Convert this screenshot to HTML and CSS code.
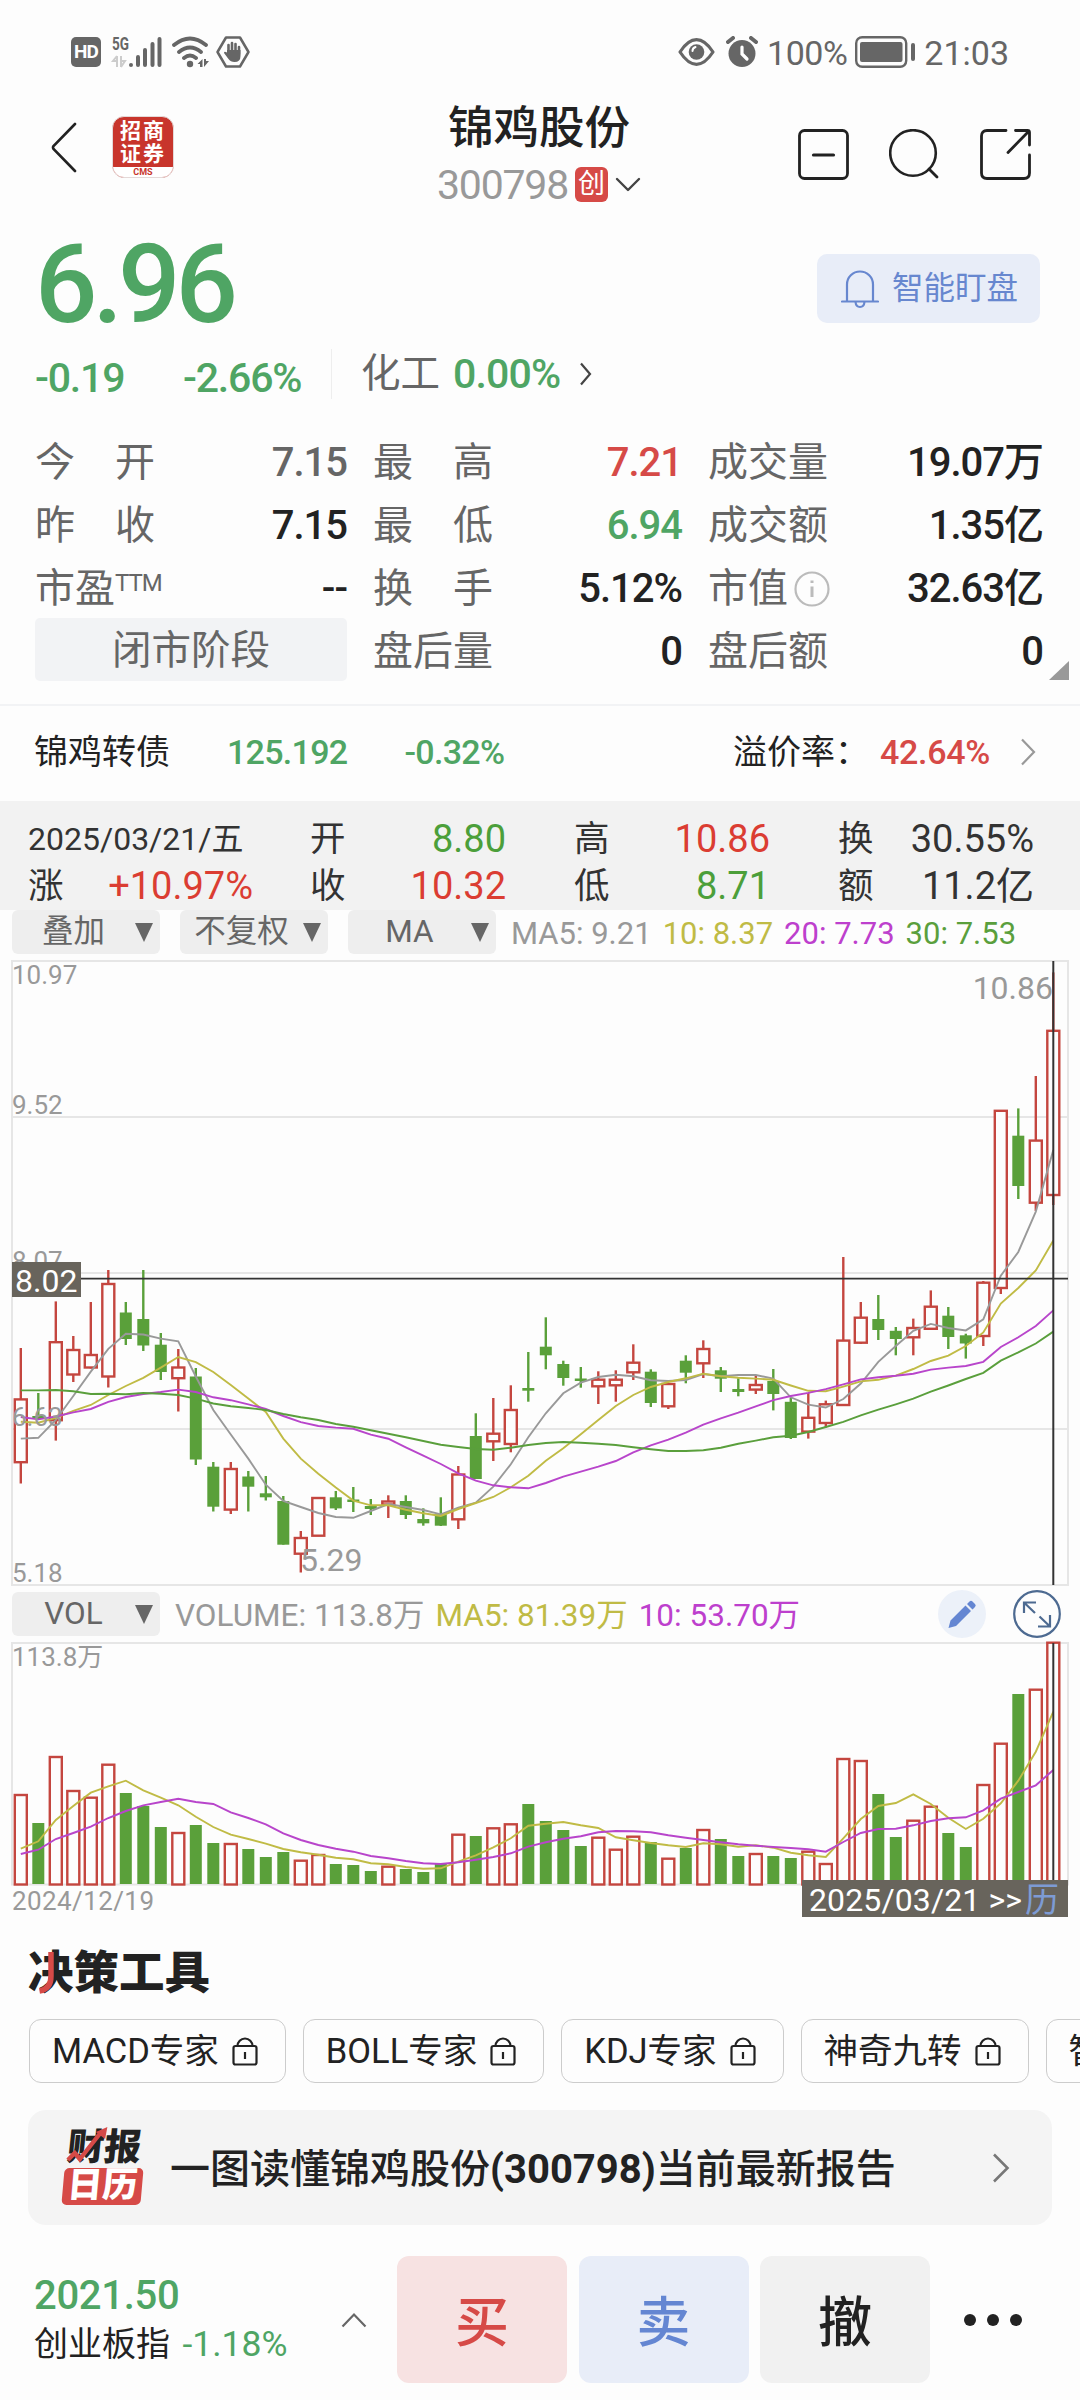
FILE: index.html
```html
<!DOCTYPE html>
<html lang="zh-CN">
<head>
<meta charset="utf-8">
<title>锦鸡股份 300798</title>
<meta name="viewport" content="width=device-width, initial-scale=1.0">
<link rel="stylesheet" href="styles.css">
</head>
<body>
<div class="statusbar">
    <span class="hd">HD</span>
    <svg class="signal" width="50" height="32" viewBox="0 0 50 32">
        <text x="0" y="14" class="signal-text" textLength="17" lengthAdjust="spacingAndGlyphs">5G</text>
        <path d="M5 20v11M5 20l-4 5h4M9 20v11M9 31l4-6h-4" stroke="#ccc" stroke-width="2" fill="none"/>
        <path d="M19 29v0M26 21v8M33 14v15M40.500 8v21M47.500 3v26" stroke="#666" stroke-width="4" stroke-linecap="round"/>
    </svg>
    <svg class="wifi" width="38" height="32" viewBox="0 0 38 32">
        <path d="M2 9Q18 -4 34 9M7 16Q18 7 29 16M12 22Q18 17 24 22" stroke="#666" stroke-width="3.800" stroke-linecap="round" fill="none"/>
        <circle cx="18" cy="28" r="3.200" fill="#666"/>
        <path d="M25.500 28l5-5v8h-2.500v-3zM32 23v8l5-6h-3v-2z" fill="#666"/>
    </svg>
    <svg width="34" height="32" viewBox="0 0 34 32">
        <path d="M10 1.500h14l8.500 14.500-8.500 14.500H10L1.500 16z" fill="none" stroke="#666" stroke-width="2.500" stroke-linejoin="round"/>
        <path d="M12.500 17V9M16 16V7M19.500 16V8M23 18v-7" stroke="#666" stroke-width="2.600" stroke-linecap="round"/>
        <path d="M11 14h13.500v6q0 6-6 6-4 0-6-3l-4.500-6q0-2 3-.500z" fill="#666"/>
    </svg>
    <div class="status-right">
        <svg width="37" height="28" viewBox="0 0 37 28">
            <path d="M2 14Q10 1.700 18.500 1.700 27 1.700 35 14 27 26.300 18.500 26.300 10 26.300 2 14z" fill="none" stroke="#666" stroke-width="3.200" stroke-linejoin="round"/>
            <circle cx="18.500" cy="14" r="7.800" fill="#666"/>
            <path d="M14.500 13q0-3 3-4" stroke="#fff" stroke-width="2" fill="none" stroke-linecap="round"/>
        </svg>
        <svg class="alarm" width="32" height="32" viewBox="0 0 32 32">
            <circle cx="16" cy="17.500" r="13.500" fill="#666"/>
            <path d="M2 6l5-4M30 6l-5-4" stroke="#666" stroke-width="4" stroke-linecap="round"/>
            <path d="M16 11v7l5 5" stroke="#fff" stroke-width="3.200" fill="none" stroke-linecap="round"/>
        </svg>
        <span class="battery-num">100%</span>
        <svg width="60" height="32" viewBox="0 0 60 32">
            <rect x="1.200" y="1.200" width="50" height="29.600" rx="6" fill="none" stroke="#666" stroke-width="2.400"/>
            <rect x="5" y="6" width="42.500" height="20" rx="2" fill="#666"/>
            <rect x="56" y="7" width="4" height="18" rx="2" fill="#666"/>
        </svg>
        <span class="clock">21:03</span>
    </div>
</div>

<header class="topbar">
    <svg class="back" width="26" height="52" viewBox="0 0 26 52"><path d="M24 2L2.500 24q-1 1.500 0 3L24 49" fill="none" stroke="#222" stroke-width="2.600" stroke-linecap="round"/></svg>
    <div class="broker">
        <div class="broker-name">招商<br>证券</div>
        <div class="broker-en">CMS</div>
    </div>
    <div class="stock">
        <div class="stock-name">锦鸡股份</div>
        <div class="stock-code">300798<span class="board">创</span><svg width="26" height="16" viewBox="0 0 26 16"><path d="M2 2l11 11L24 2" fill="none" stroke="#444" stroke-width="2.400" stroke-linecap="round" stroke-linejoin="round"/></svg></div>
    </div>
    <div class="actions">
        <svg width="52" height="52" viewBox="0 0 52 52"><rect x="1.500" y="1.500" width="48" height="48" rx="5" fill="none" stroke="#222" stroke-width="2.800"/><path d="M15.500 26h20" stroke="#222" stroke-width="3.200" stroke-linecap="round"/></svg>
        <svg width="52" height="52" viewBox="0 0 52 52"><circle cx="24" cy="24" r="22.800" fill="none" stroke="#222" stroke-width="2.600"/><path d="M40 40l8 8" stroke="#222" stroke-width="2.800" stroke-linecap="round"/></svg>
        <svg width="52" height="52" viewBox="0 0 52 52"><path d="M26 1.500H7Q1.500 1.500 1.500 7v37q0 5.500 5.500 5.500h37q5.500 0 5.500-5.500V26M35.500 1.500h12q2 0 2 2V16M49 2L28 23.500" fill="none" stroke="#222" stroke-width="2.800" stroke-linecap="round"/></svg>
    </div>
</header>

<section class="price-row">
    <div class="price">6.96</div>
    <div class="watch">
        <svg width="38" height="40" viewBox="0 0 38 40"><path d="M6 32V15.500a13 13 0 0 1 26 0V32M1 32.500h36M14.500 33q.500 5 4.500 5t4.500-5" fill="none" stroke="#6787cf" stroke-width="2.200" stroke-linecap="round"/></svg>
        <span>智能盯盘</span>
    </div>
</section>
<section class="change-row">
    <span class="chg green">-0.19</span>
    <span class="pct green">-2.66%</span>
    <span class="industry">化工</span>
    <span class="industry-pct green">0.00%</span>
    <svg width="13" height="24" viewBox="0 0 13 24"><path d="M2 1.500L11 12 2 22.500" fill="none" stroke="#444" stroke-width="2.200"/></svg>
</section>

<section class="quotes">
    <div class="q"><span>今　开</span><b class="gray">7.15</b></div>
    <div class="q"><span>最　高</span><b class="red">7.21</b></div>
    <div class="q"><span>成交量</span><b>19.07万</b></div>
    <div class="q"><span>昨　收</span><b>7.15</b></div>
    <div class="q"><span>最　低</span><b class="green">6.94</b></div>
    <div class="q"><span>成交额</span><b>1.35亿</b></div>
    <div class="q"><span>市盈<sup>TTM</sup></span><b>--</b></div>
    <div class="q"><span>换　手</span><b>5.12%</b></div>
    <div class="q"><span>市值<svg class="info" width="36" height="36" viewBox="0 0 36 36"><circle cx="18" cy="18" r="16.500" fill="none" stroke="#bbb" stroke-width="2.200"/><path d="M18 15.500V26M18 9.500v2.500" stroke="#bbb" stroke-width="3"/></svg></span><b>32.63亿</b></div>
    <div class="phase">闭市阶段</div>
    <div class="q"><span>盘后量</span><b>0</b></div>
    <div class="q"><span>盘后额</span><b>0</b></div>
    <i class="corner"></i>
</section>

<section class="bond">
    <span>锦鸡转债</span>
    <b class="green bond-price">125.192</b>
    <b class="green bond-pct">-0.32%</b>
    <span class="premium">溢价率：</span>
    <b class="red premium-num">42.64%</b>
    <svg width="16" height="28" viewBox="0 0 16 28"><path d="M2 1.500L14 14 2 26.500" fill="none" stroke="#999" stroke-width="2.200"/></svg>
</section>

<section class="daybar">
    <div class="d first"><span class="date">2025/03/21/五</span></div>
    <div class="d"><span>开</span><em class="dn">8.80</em></div>
    <div class="d"><span>高</span><em class="up">10.86</em></div>
    <div class="d"><span>换</span><em>30.55%</em></div>
    <div class="d first"><span>涨</span><em class="up">+10.97%</em></div>
    <div class="d"><span>收</span><em class="up">10.32</em></div>
    <div class="d"><span>低</span><em class="dn">8.71</em></div>
    <div class="d"><span>额</span><em>11.2亿</em></div>
</section>

<section class="indicators">
    <div class="select"><span>叠加</span><i></i></div>
    <div class="select"><span>不复权</span><i></i></div>
    <div class="select"><span>MA</span><i></i></div>
    <div class="legend">
        <span class="c5">MA5: 9.21</span><span class="c10">10: 8.37</span><span class="c20">20: 7.73</span><span class="c30">30: 7.53</span>
    </div>
</section>
<svg class="kline" id="kline" width="1080" height="638" viewBox="0 0 1080 638"></svg>

<section class="indicators vol-head">
    <div class="select"><span>VOL</span><i></i></div>
    <div class="legend">
        <span class="c5">VOLUME: 113.8万</span><span class="c10">MA5: 81.39万</span><span class="c20">10: 53.70万</span>
    </div>
    <div class="chart-btns">
        <svg width="48" height="48" viewBox="0 0 48 48"><circle cx="24" cy="24" r="24" fill="#ecf1f9"/><path d="M10.500 38l2-7.500 15-15 5.500 5.500-15 15zM29 14l2.500-2.500q1.500-1.500 3 0l2.500 2.500q1.500 1.500 0 3L34.500 19.500z" fill="#6486d2"/></svg>
        <svg width="48" height="48" viewBox="0 0 48 48"><circle cx="24" cy="24" r="22.800" fill="none" stroke="#4d6a91" stroke-width="2.200"/><path d="M22 23L11 12.500M11 23V12.500h12M26.500 26.500L37 36.500M37 25v11.500H25" fill="none" stroke="#4d6a91" stroke-width="2.200"/></svg>
    </div>
</section>
<svg class="vol" id="vol" width="1080" height="280" viewBox="0 0 1080 280"></svg>

<section class="tools">
    <h2>决策工具<svg width="20" height="44" viewBox="0 0 20 44"><path d="M14 1v24q0 13-11.500 15" fill="none" stroke="#d64a47" stroke-width="5.500"/></svg></h2>
    <div class="chips">
        <div class="chip">MACD专家<svg width="26" height="29" viewBox="0 0 26 29"><use href="#lock"/></svg></div>
        <div class="chip">BOLL专家<svg width="26" height="29" viewBox="0 0 26 29"><use href="#lock"/></svg></div>
        <div class="chip">KDJ专家<svg width="26" height="29" viewBox="0 0 26 29"><use href="#lock"/></svg></div>
        <div class="chip">神奇九转<svg width="26" height="29" viewBox="0 0 26 29"><use href="#lock"/></svg></div>
        <div class="chip">智能</div>
    </div>
</section>

<section class="report">
    <div class="report-logo">
        <div class="logo-top">财报<svg width="40" height="36" viewBox="0 0 40 36"><path d="M2 33l6-7 6 6L31 7" fill="none" stroke="#d64a47" stroke-width="4.500"/><path d="M27 5l11-5-1 12z" fill="#d64a47"/></svg></div>
        <div class="logo-bottom"><span>日历</span></div>
    </div>
    <div class="report-text">一图读懂锦鸡股份<b>(300798)</b>当前最新报告</div>
    <svg width="18" height="30" viewBox="0 0 18 30"><path d="M2 1.500L15.500 15 2 28.500" fill="none" stroke="#777" stroke-width="2.600"/></svg>
</section>

<footer class="trade">
    <div class="index">
        <div class="index-num green">2021.50</div>
        <div class="index-name">创业板指 <span class="green">-1.18%</span></div>
    </div>
    <svg class="caret" width="26" height="16" viewBox="0 0 26 16"><path d="M1.500 14.500L13 2.500l11.500 12" fill="none" stroke="#666" stroke-width="2.200"/></svg>
    <div class="btn buy">买</div>
    <div class="btn sell">卖</div>
    <div class="btn cancel">撤</div>
    <div class="more"><i></i><i></i><i></i></div>
</footer>

<svg width="0" height="0" class="defs">
    <symbol id="lock" viewBox="0 0 26 29">
        <rect x="1.500" y="9" width="23" height="18.500" rx="2" fill="none" stroke="#222" stroke-width="2.200"/>
        <path d="M5.500 9a7.500 7.500 0 0 1 15 0M13 15v7" fill="none" stroke="#222" stroke-width="2.200"/>
    </symbol>
</svg>
<script src="chart.js"></script>
</body>
</html>
```
FILE: styles.css
```css
* { box-sizing: border-box; }
body {
    margin: 0;
    width: 1080px;
    height: 2400px;
    overflow: hidden;
    background: #fdfdfd;
    color: #222;
    font-family: Roboto, "Noto Sans CJK SC", sans-serif;
}
svg { display: block; flex: none; }
b { font-weight: 500; }
em, i { font-style: normal; }
.green { color: #4fa564; }
.red { color: #d64a47; }
.gray { color: #666; }
.defs { position: absolute; }

/* status bar */
.statusbar {
    display: flex;
    align-items: center;
    height: 104px;
    padding: 0 71px;
    color: #666;
}
.hd {
    width: 30px;
    height: 30px;
    margin-right: 11px;
    border-radius: 5px;
    background: #666;
    color: #fff;
    font-size: 19px;
    font-weight: 700;
    line-height: 30px;
    text-align: center;
    letter-spacing: -1px;
}
.signal { overflow: visible; }
.signal-text { font-size: 18px; font-weight: 700; fill: #666; }
.wifi { margin: 0 6px 0 10px; }
.status-right {
    display: flex;
    align-items: center;
    margin-left: auto;
    font-size: 34px;
    line-height: 40px;
}
.alarm { margin: 0 9px 0 11px; }
.battery-num { margin-right: 8px; padding-top: 2px; letter-spacing: -.5px; }
.clock { margin-left: 9px; padding-top: 2px; }

/* header */
.topbar {
    display: grid;
    grid-template-columns: 61px 335px 1fr 234px;
    align-items: start;
    height: 118px;
    padding: 0 48px 0 51px;
}
.back { margin-top: 18px; }
.broker {
    width: 62px;
    height: 62px;
    margin-top: 12px;
    border-radius: 12px;
    background: #c8352c;
    overflow: hidden;
    color: #fff;
    border: 1px solid #e4d9d8;
}
.broker-name { height: 50px; padding-top: 3px; font-size: 21px; font-weight: 700; line-height: 23px; letter-spacing: 2px; text-align: center; }
.broker-en { height: 12px; background: #fff; color: #c8352c; font-size: 9px; font-weight: 700; line-height: 10px; text-align: center; }
.stock { width: 204px; margin-left: -10px; white-space: nowrap; }
.stock-name { padding-left: 11px; font-size: 45.500px; font-weight: 500; line-height: 50px; }
.stock-code { display: flex; align-items: center; height: 58px; padding-top: 3px; color: #999; font-size: 41px; letter-spacing: -1.200px; }
.board { width: 35px; height: 35px; margin: 0 7px 0 7px; border-radius: 6px; background: #d64a47; color: #fff; font-size: 27px; line-height: 34px; text-align: center; letter-spacing: 0; }
.actions { display: flex; gap: 39px; margin-top: 25px; }

/* price */
.price-row { display: flex; justify-content: space-between; height: 120px; padding: 0 40px 0 35px; }
.price { color: #4fa564; font-size: 110px; font-weight: 500; line-height: 126px; letter-spacing: -5px; }
.watch {
    display: flex;
    align-items: center;
    gap: 13px;
    width: 223px;
    height: 69px;
    margin-top: 32px;
    padding-left: 24px;
    border-radius: 10px;
    background: #e8edf8;
    color: #6787cf;
    font-size: 31.500px;
    line-height: 69px;
}
.change-row { display: flex; align-items: center; height: 58px; padding: 6px 35px 0; font-size: 41px; font-weight: 500; line-height: 52px; }
.chg, .pct { padding-top: 8px; letter-spacing: -1.200px; }
.chg { width: 148px; }
.pct { width: 148px; }
.industry { padding: 0 13px 0 29px; border-left: 1px solid #eee; color: #666; font-size: 39.500px; font-weight: 400; line-height: 50px; }
.industry-pct { padding-right: 18px; letter-spacing: -.800px; }

/* quote grid */
.quotes {
    position: relative;
    display: grid;
    grid-template-columns: 312px 309px 335px;
    grid-auto-rows: 63px;
    column-gap: 26px;
    height: 304px;
    padding: 30px 36px 0 35px;
}
.q { display: flex; justify-content: space-between; align-items: center; padding-top: 3px; font-size: 40px; line-height: 60px; white-space: nowrap; }
.q b { letter-spacing: -1px; }
.q span { display: flex; align-items: center; color: #666; }
.q sup { align-self: flex-start; font-size: 24px; line-height: 48px; letter-spacing: -1px; }
.info { margin-left: 6px; }
.phase { height: 63px; margin-top: -1px; border-radius: 5px; background: #f2f3f5; color: #666; font-size: 39.500px; line-height: 65px; text-align: center; }
.corner { position: absolute; left: 1049px; top: 261px; border-left: 20px solid transparent; border-bottom: 19px solid #999; }

/* convertible bond */
.bond {
    display: flex;
    align-items: center;
    height: 97px;
    padding: 0 44px 4px 34px;
    border-top: 2px solid #f2f3f5;
    font-size: 34px;
    line-height: 50px;
}
.bond b { letter-spacing: -.700px; }
.bond-price { margin-left: 57px; }
.bond-pct { margin-left: 57px; }
.premium { margin-left: auto; }
.bond .premium-num { margin: 0 30px 0 11px; letter-spacing: -.300px; }

/* selected day */
.daybar {
    display: grid;
    grid-template-columns: 214px 196px 196px 196px;
    grid-auto-rows: 47px;
    column-gap: 68px;
    height: 109px;
    padding: 15px 0 0 28px;
    background: #f2f2f2;
    color: #333;
}
.d { display: flex; justify-content: space-between; align-items: center; font-size: 35.500px; line-height: 47px; white-space: nowrap; }
.d.first { width: 225px; }
.d em { font-size: 38px; }
.d .date { font-size: 32px; }
.up { color: #db3d32; }
.dn { color: #4c9f3a; }

/* indicator bars */
.indicators { display: flex; align-items: flex-start; height: 44px; padding-left: 12px; }
.select {
    display: flex;
    align-items: center;
    width: 148px;
    height: 44px;
    margin-right: 20px;
    padding-right: 7px;
    border-radius: 6px;
    background: #eee;
    color: #666;
    font-size: 31.500px;
    line-height: 46px;
}
.select span { flex: 1; text-align: center; white-space: nowrap; }
.select i { border: 9.500px solid transparent; border-top: 19px solid #666; border-bottom: 0; }
.legend { display: flex; gap: 11px; margin-left: -5px; font-size: 31px; line-height: 48px; white-space: nowrap; }
.c5 { color: #999; }
.c10 { color: #c0bb45; }
.c20 { color: #bd40cd; }
.c30 { color: #5a9f3c; }
.kline { margin-top: -4px; }
.vol-head { height: 48px; margin-top: 4px; }
.vol-head .legend { font-size: 31.500px; }
.chart-btns { display: flex; gap: 27px; margin: -2px 19px 0 auto; }
.axis { fill: #999; font-size: 26px; }
.mark { fill: #999; font-size: 32px; }
.tag { fill: #fff; font-size: 32px; }

/* tools */
.tools { height: 190px; overflow: hidden; }
.tools h2 { position: relative; height: 70px; margin: 0 0 0 28px; padding-top: 21px; font-size: 45.500px; font-weight: 900; line-height: 66px; }
.tools h2 svg { position: absolute; left: 9px; top: 31px; }
.chips { display: flex; gap: 17px; margin: 29px 0 0 29px; }
.chip {
    display: flex;
    flex: none;
    align-items: center;
    height: 64px;
    padding: 0 27px 0 22px;
    border: 1px solid #ccc;
    border-radius: 12px;
    font-size: 34.500px;
    line-height: 64px;
}
.chip svg { margin-left: 13px; }

/* report card */
.report {
    display: flex;
    align-items: center;
    height: 115px;
    margin: 0 28px;
    padding: 0 42px 0 34px;
    border-radius: 18px;
    background: #f4f4f4;
}
.report-logo { width: 81px; margin-right: 27px; }
.logo-top { position: relative; width: 76px; height: 37px; margin-left: 5px; font-size: 37px; font-weight: 900; line-height: 34px; transform: skewX(-6deg); }
.logo-top svg { position: absolute; left: 0; top: -4px; }
.logo-bottom { width: 79px; height: 37px; margin-left: 1px; border-radius: 5px; background: #d64a47; color: #fff; font-size: 35px; font-weight: 900; line-height: 35px; text-align: center; transform: skewX(-5deg); }
.report-text { flex: 1; padding-top: 4px; font-size: 40px; font-weight: 500; line-height: 60px; white-space: nowrap; }
.report-text b { font-weight: 700; }

/* trade bar */
.trade { display: flex; align-items: center; height: 127px; margin-top: 31px; padding-left: 34px; }
.index { width: 307px; white-space: nowrap; }
.index-num { font-size: 40px; font-weight: 500; line-height: 48px; letter-spacing: -.300px; }
.index-name { font-size: 34px; line-height: 48px; }
.index-name span { margin-left: 4px; font-size: 35.500px; }
.caret { margin-right: 30px; }
.btn { width: 170px; height: 127px; margin-right: 11.500px; border-radius: 12px; font-size: 54px; font-weight: 500; line-height: 136px; text-align: center; }
.buy { background: #f7e2e2; color: #d64a47; }
.sell { background: #e8edf8; color: #6486d2; }
.cancel { background: #f1f1f1; }
.more { display: flex; gap: 11px; margin-left: 22px; }
.more i { width: 12px; height: 12px; border-radius: 50%; background: #222; }
```
FILE: chart.js
```js
const RED = '#c4463f';
const GREEN = '#5aa03a';
const X0 = 20.8;
const STEP = 17.5;

// up flag, body top, body bottom, wick top, wick bottom
const candles = [
    [1,449.4,512.2,398,533.5],[0,466,469,443,470],[1,392.2,470.2,351.4,490.6],[1,400,424.5,386,432],[1,405,417.5,352,418.5],
    [1,334,426.5,320,437.5],[0,362.5,389,352,395],[0,369,395.5,320,401],[0,394.7,422,383,430],[1,417.5,428.2,399,461.5],
    [0,426.5,509.5,418,515],[0,516.7,556.7,512,561.5],[1,519,559.6,512,564],[0,526.5,536.7,521,561.5],[0,543.3,547.3,526,550.5],
    [0,551,594.7,546,594.7],[1,588,603.7,581,622.5],[1,548,585.7,548,585.7],[0,547.3,558.4,541,560],[0,549.5,552,537,562],
    [0,556,559,549,565],[1,551.5,554.5,545.3,568],[0,551,565,545.3,569],[0,569,573.3,558.3,575.7],[0,564.3,575.7,547.3,576],
    [1,524.5,569.3,516,579],[0,486,529,463.3,529],[1,483.7,491.3,448,511],[1,460,494,435.3,502.3],[0,438,440.7,402,451.7],
    [0,396.7,405.3,367.3,419.3],[0,414,428,410.7,435.7],[0,428.5,431,417,437.7],[1,429.7,436.3,421.3,454],[1,429.7,435.3,420.3,451.7],
    [1,412.7,422.3,394.3,430],[0,421.7,453,419.3,457],[1,434,456.3,434,459],[0,410.7,422.7,405.3,433.3],[1,399,413.3,390.3,428],
    [0,420.3,428.7,417,442],[0,439,442,428.3,446.3],[1,435,439.6,425.7,444],[0,431,444,419,460.4],[0,451.8,488,447.7,489],
    [1,467.8,481.6,443,488.6],[1,454.3,473,450.6,477.5],[1,390.6,455,307,455],[1,367.7,392.7,352,394],[0,369,380,345,390],
    [0,380.8,389,377,405.3],[1,378,387.3,368.6,405.3],[1,356.7,378.8,340.4,378.8],[0,365.7,387,357,399],[0,385.3,393.5,383.7,408.6],
    [1,332.7,386,331,396],[1,160.8,338,160.8,344],[0,185.7,236,158.4,249],[1,190.6,252.7,126,261],[1,80.8,245,22.4,255]
];
const ma5 = [488.6,487.8,470,446,421.6,398.8,383.7,384.5,388.6,391.4,426.5,460,484.5,508.6,534.7,551,557,563,567,567.8,561,554,557,560,564.3,557.7,552.7,536.7,514.3,487.3,463.3,443.3,432.7,427,424.7,426.3,430.3,431,430,424,426.3,425,425,428.6,447.3,454.7,457.5,449,433.5,411.8,396,380.8,373.9,378,380.4,369.4,325.7,302,261.6,200];
const ma10 = [471.8,472.7,467.8,460.8,455,445,436,427.8,417.6,407,412.2,422,435,448.6,462,488.6,508.6,523.7,537.6,550.6,555.3,555.3,559.7,563.3,566,559,553,547,537.3,525.7,510.7,498.3,484.3,470,456,445,437,432,428.3,423.7,426.3,427.7,428.6,429.8,435.5,440.8,441.2,436.7,431.4,429.8,425.7,419,411,405.7,396,382.4,353.5,338,320.4,290.6];
const ma20 = [467,469.4,466.5,462.4,459,451.8,447,444,442,439.6,442,447.3,450.2,454.3,459,466,472.2,476,477.6,478.8,484.7,488.7,497.3,505.7,514,523.3,530.7,535.3,537.3,538.3,533,526.7,521.7,516.7,511,502.3,495.3,489.7,482.7,474.7,468.3,462.7,456.3,450.2,446,442.9,439.2,434.3,429.4,427.3,425.7,423.7,419.6,417.6,416,411.8,397,387.3,376,360.4];
const ma30 = [440.4,440.4,440,441.2,444,443.7,444.3,443,443.7,445,448.6,453.5,456.3,458,460,464,467.3,470,474,476.7,480.3,483.7,487.3,491,494.7,497,499,499.7,497.7,495,493,492,492.7,493.7,495,497.3,499.3,501,501,500.3,497.7,493.7,490.6,487.3,485.7,482,477,471.8,465.3,459.6,454.3,448.6,441.6,435.5,429,422.9,410.6,402.4,393.5,381.6];

const bars = [155,183,117,151,157.7,124.7,153,166,187,193,185,203,204,209,217,212,220.7,215,224,225,231,226.7,229,232,223.3,194.7,196,188.3,184.3,164,181,190,206,197.7,209.7,196.7,202,218.7,208,190,199,216,214,216,218,211.7,224,119,121,154,197,180.7,166.7,193,207,145,103.7,54,49.7,2.7];
const vma5 = [208.7,201.3,180,166,152.7,146.3,140.7,150.3,157.7,165.3,176.7,187,194.7,199,203.7,209,212.3,214.7,217.7,219.3,223.3,224.3,227,228.7,228.3,221.7,215.3,207.3,198.3,185.7,183.7,182,185.3,188,197.3,200.3,203,205.3,207,203.3,204.3,206.7,205.3,207.7,212.7,215.3,217,198.3,179,166,163,154.3,164,177.7,189,178.7,163.3,140.7,111.7,71.7];
const vma10 = [214,209.7,199,193,186.7,178,171,165.3,162,158.7,162,164,172.3,178,184.3,193.3,200,205,208.7,211.7,216,218.3,221,223.3,224,222.3,219.7,217,213.3,206.7,202.3,198.7,196.3,192.3,191,191.3,192.3,195.3,197.7,200,202.3,204.3,205.7,207,208,209.3,211.7,202,193,189,188.7,185.3,181,178.3,177.3,170.3,158.7,152,145.3,130];

function x(i) {
    return X0 + i * STEP;
}
function line(x1, y1, x2, y2, color, w) {
    return `<line x1="${x1}" y1="${y1}" x2="${x2}" y2="${y2}" stroke="${color}" stroke-width="${w}"/>`;
}
function poly(data, color) {
    const pts = data.map((v, i) => x(i) + ',' + v).join(' ');
    return `<polyline points="${pts}" fill="none" stroke="${color}" stroke-width="1.9"/>`;
}
function text(x, y, str, cls, extra) {
    return `<text x="${x}" y="${y}" class="${cls}" ${extra || ''}>${str}</text>`;
}
function box(i, up, top, bottom) {
    if (up) {
        return `<rect x="${x(i) - 6}" y="${top}" width="12" height="${bottom - top}" fill="#fdfdfd" stroke="${RED}" stroke-width="2.4"/>`;
    }
    return `<rect x="${x(i) - 6}" y="${top}" width="12" height="${bottom - top}" fill="${GREEN}"/>`;
}

function drawKline() {
    let s = '<rect x="12" y="11" width="1056" height="624" fill="none" stroke="#e6e6e6" stroke-width="2"/>';
    [167, 323, 479].forEach(y => { s += line(12, y, 1068, y, '#e6e6e6', 2); });
    candles.forEach((c, i) => {
        s += line(x(i), c[3], x(i), c[4], c[0] ? RED : GREEN, 2.4);
        s += box(i, c[0], c[1], c[2]);
    });
    s += poly(ma5, '#999') + poly(ma10, '#c0bb45') + poly(ma20, '#b845cb') + poly(ma30, '#5a9f3c');
    s += text(12, 34, '10.97', 'axis') + text(12, 164, '9.52', 'axis') + text(12, 320, '8.07', 'axis');
    s += text(12, 475.5, '6.63', 'axis') + text(12, 632, '5.18', 'axis');
    s += text(300, 621, '5.29', 'mark') + text(1053, 49, '10.86', 'mark', 'text-anchor="end"');
    s += line(12, 328.6, 1068, 328.6, '#333', 1.8) + line(1053.3, 11, 1053.3, 635, '#333', 2);
    s += '<rect x="12" y="312" width="69" height="35" fill="#68645c"/>' + text(15, 341.500, '8.02', 'tag');
    document.getElementById('kline').innerHTML = s;
}

function drawVol() {
    let s = '<rect x="12" y="3" width="1056" height="241.500" fill="none" stroke="#e6e6e6" stroke-width="2"/>';
    bars.forEach((top, i) => { s += box(i, candles[i][0], top, candles[i][0] ? 244.5 : 244); });
    s += poly(vma5, '#c0bb45') + poly(vma10, '#b845cb');
    s += line(1053.3, 3, 1053.3, 244, '#333', 2);
    s += text(12, 26, '113.8万', 'axis') + text(12, 270, '2024/12/19', 'axis', 'textLength="142"');
    s += '<rect x="802" y="240" width="266" height="37" fill="#68645c"/>';
    s += text(809, 271, '2025/03/21 >>', 'tag', 'textLength="213"');
    s += '<text x="1025" y="272" font-size="34" fill="#7d9bd4">历</text>';
    document.getElementById('vol').innerHTML = s;
}

drawKline();
drawVol();
```
